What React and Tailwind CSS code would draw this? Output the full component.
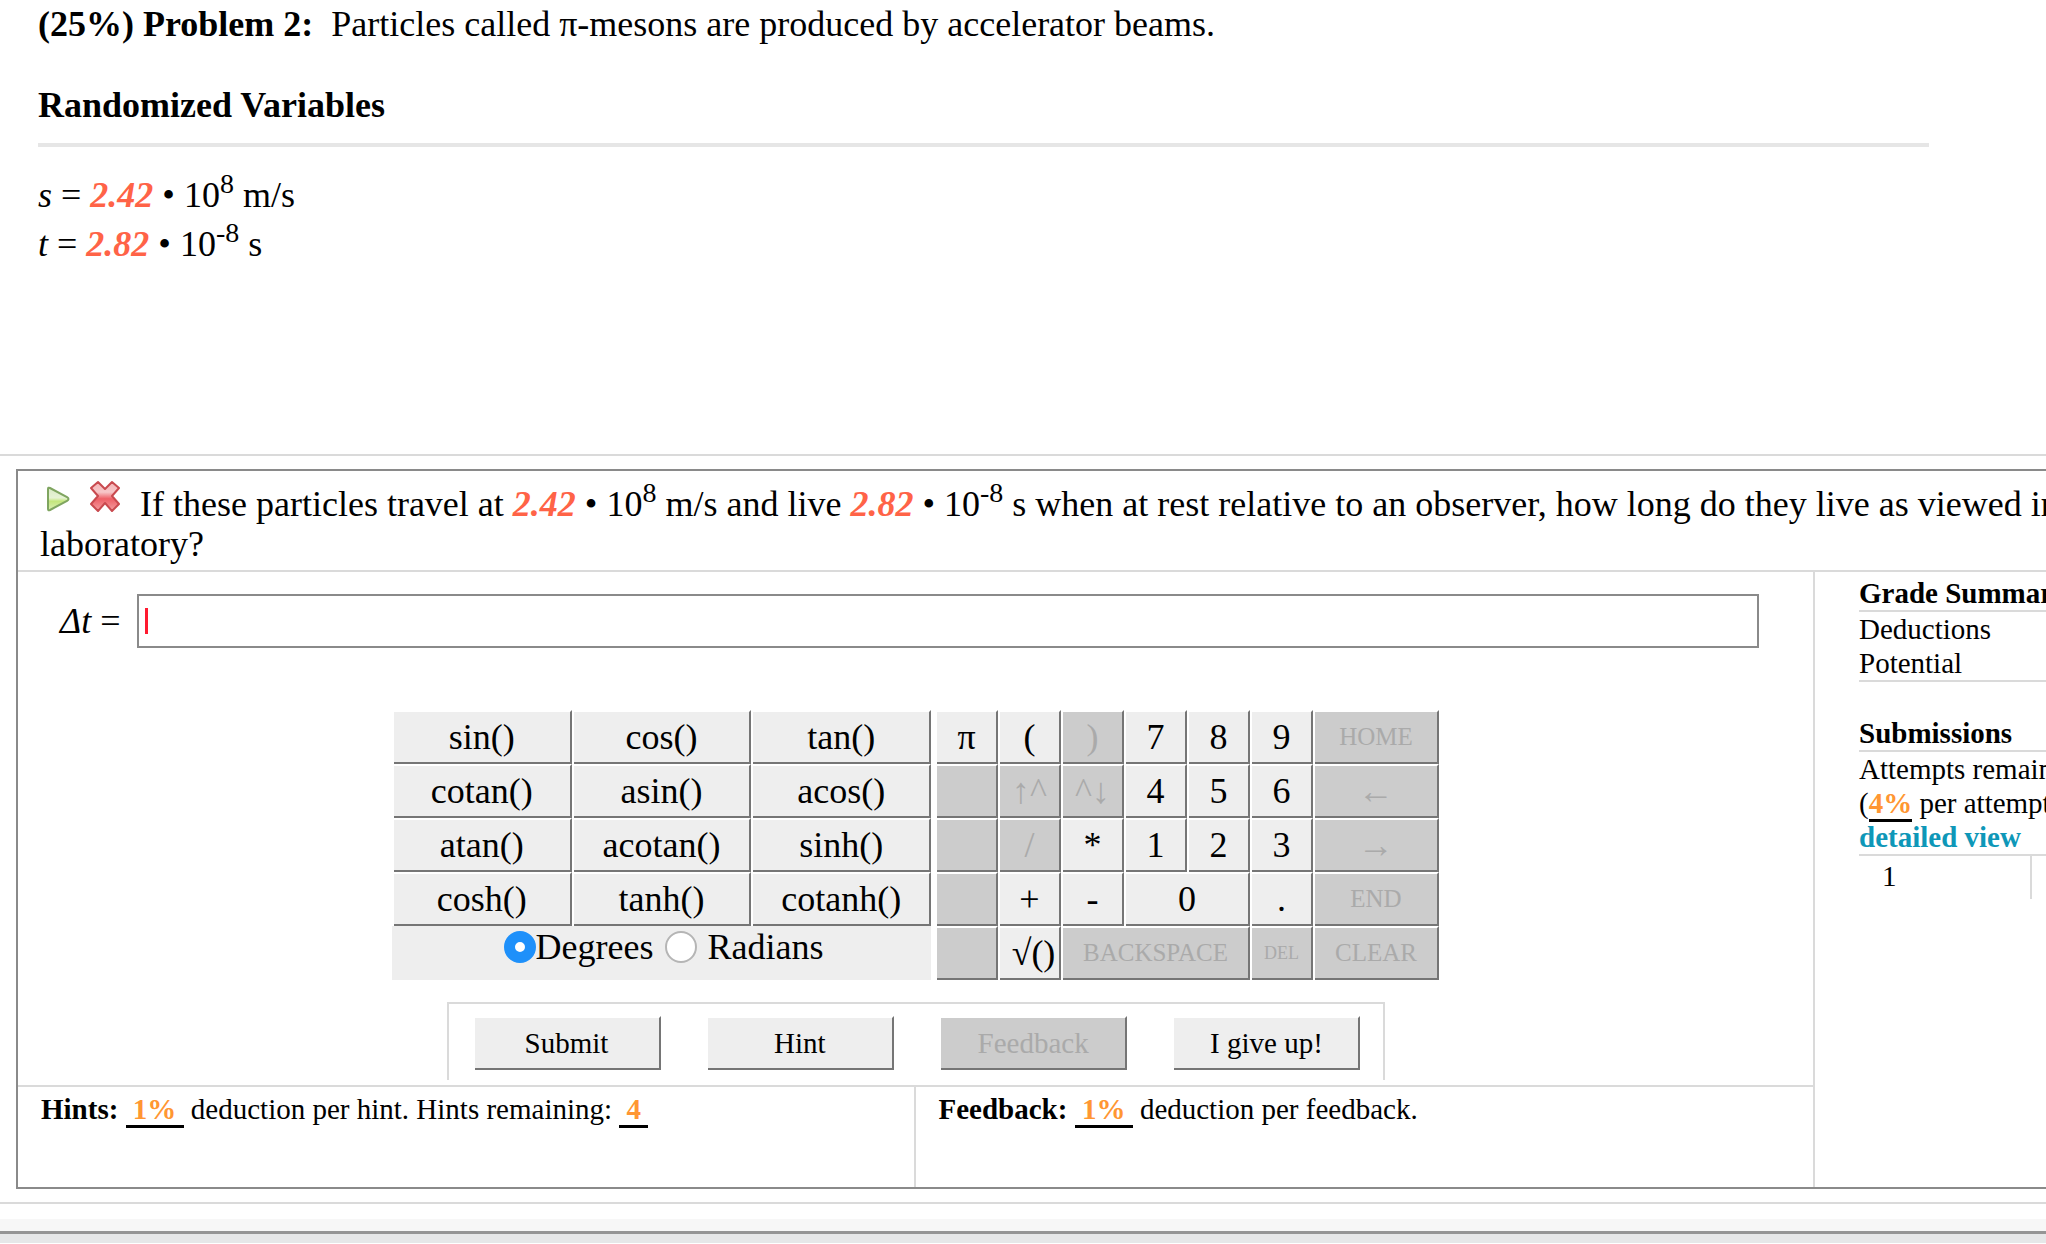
import { useState } from 'react';

const FUNCTIONS = [
  'sin()', 'cos()', 'tan()',
  'cotan()', 'asin()', 'acos()',
  'atan()', 'acotan()', 'sinh()',
  'cosh()', 'tanh()', 'cotanh()',
];

const KEYS = [
  { label: 'π' },
  { label: '(' },
  { label: ')', disabled: true },
  { label: '7' },
  { label: '8' },
  { label: '9' },
  { label: 'HOME', disabled: true, size: 'text-[25px]', span: 'col-span-2' },
  { label: '', disabled: true },
  { label: '↑^', disabled: true },
  { label: '^↓', disabled: true },
  { label: '4' },
  { label: '5' },
  { label: '6' },
  { label: '←', disabled: true, span: 'col-span-2' },
  { label: '', disabled: true },
  { label: '/', disabled: true },
  { label: '*' },
  { label: '1' },
  { label: '2' },
  { label: '3' },
  { label: '→', disabled: true, span: 'col-span-2' },
  { label: '', disabled: true },
  { label: '+' },
  { label: '-' },
  { label: '0', span: 'col-span-2' },
  { label: '.' },
  { label: 'END', disabled: true, size: 'text-[25px]', span: 'col-span-2' },
  { label: '', disabled: true },
  { label: '√()', span: 'pl-2' },
  { label: 'BACKSPACE', disabled: true, size: 'text-[25px]', span: 'col-span-3' },
  { label: 'DEL', disabled: true, size: 'text-[18px]' },
  { label: 'CLEAR', disabled: true, size: 'text-[25px]', span: 'col-span-2' },
];

const ACTIONS = [
  { label: 'Submit' },
  { label: 'Hint' },
  { label: 'Feedback', disabled: true },
  { label: 'I give up!' },
];

function Key({ label, disabled, size = 'text-[36px]', span = '', onClick }) {
  return (
    <button
      type="button"
      disabled={disabled}
      onClick={onClick}
      aria-label={label || 'unused'}
      className={`flex h-[54px] items-center justify-center border-y-2 border-r-2 border-t-transparent border-r-[#757575] border-b-[#757575] bg-clip-padding whitespace-nowrap ${
        disabled ? 'bg-[#ccc] text-[#aaa]' : 'bg-[#eee] text-black'
      } ${size} ${span}`}
    >
      {label}
    </button>
  );
}

function Value({ children }) {
  return <b className="font-bold text-[#ff6347] italic">{children}</b>;
}

function Blank({ children }) {
  return <span className="border-b-3 border-black font-bold whitespace-pre text-[#ff9632]">{children}</span>;
}

function PlayIcon() {
  return (
    <svg className="mr-5 mb-1 inline-block h-[26px] w-[24px] align-baseline" viewBox="0 0 24 26" aria-hidden="true">
      <defs>
        <linearGradient id="play" x1="0" y1="0" x2="0" y2="1">
          <stop offset="0" stopColor="#d9ebc6" />
          <stop offset="0.45" stopColor="#e6f3d4" />
          <stop offset="0.6" stopColor="#c3e67c" />
          <stop offset="1" stopColor="#dcefb8" />
        </linearGradient>
      </defs>
      <path d="M2 3 Q2 1 4 2 L21 11 Q24 13 21 15 L4 24 Q2 25 2 23 Z" fill="url(#play)" stroke="#7fa560" strokeWidth="2" />
    </svg>
  );
}

function CrossIcon() {
  return (
    <svg className="mr-5 mb-1 inline-block h-[32px] w-[30px] align-baseline" viewBox="0 0 30 32" aria-hidden="true">
      <defs>
        <linearGradient id="cross" x1="0" y1="0" x2="0" y2="1">
          <stop offset="0" stopColor="#f4b4b6" />
          <stop offset="0.35" stopColor="#f7c6c8" />
          <stop offset="0.58" stopColor="#ee5f66" />
          <stop offset="1" stopColor="#f4a0a3" />
        </linearGradient>
      </defs>
      <path
        d="M8 2 L15 9 L22 2 L29 8 L22 16 L29 24 L22 31 L15 23 L8 31 L1 24 L8 16 L1 8 Z"
        fill="url(#cross)"
        stroke="#c94a4f"
        strokeWidth="2"
        strokeLinejoin="round"
      />
    </svg>
  );
}

function Radio({ label, checked, onChange, gap }) {
  return (
    <label className={`flex items-center ${gap}`}>
      <input
        type="radio"
        name="angle"
        checked={checked}
        onChange={onChange}
        className="size-8 appearance-none rounded-full border-2 border-[#b5b5b5] bg-white checked:border-[11px] checked:border-[#1e90fa]"
      />
      {label}
    </label>
  );
}

export default function App() {
  const [answer, setAnswer] = useState('');
  const [unit, setUnit] = useState('Degrees');

  return (
    <div className="overflow-hidden bg-white font-['Liberation_Serif',serif] text-[36px] leading-10 text-black">
      <header className="mr-[117px] ml-[38px] pt-1">
        <h1>
          <b className="font-bold">(25%) Problem 2:</b>
          {'\u00a0 '}Particles called π-mesons are produced by accelerator beams.
        </h1>
        <h2 className="mt-[41px] font-bold">Randomized Variables</h2>
        <div className="mt-[18px] h-1 bg-[#e6e6e6]" />
        <div className="mt-6 leading-[49px]">
          <p>
            <i>s</i> = <Value>2.42</Value> • 10<sup className="text-[28px]">8</sup> m/s
          </p>
          <p>
            <i>t</i> = <Value>2.82</Value> • 10<sup className="text-[28px]">-8</sup> s
          </p>
        </div>
      </header>

      <main className="mt-[185px] border-y-2 border-[#dadada] py-[13px] pl-4">
        {/* the panel runs on past the right edge of the window */}
        <section className="-mr-[190px] border-2 border-[#8a8a8a]">
          <p className="border-b-2 border-[#dadada] pt-[9px] pr-5 pb-[6px] pl-[22px]">
            <span className="ml-[6px]">
              <PlayIcon />
              <CrossIcon />
            </span>
            If these particles travel at <Value>2.42</Value> • 10<sup className="text-[28px]">8</sup> m/s and live{' '}
            <Value>2.82</Value> • 10<sup className="text-[28px]">-8</sup> s when at rest relative to an observer, how
            long do they live as viewed in the laboratory?
          </p>

          <div className="flex">
            <div className="min-w-0 flex-1">
              <div className="flex items-center pt-[22px] pr-[54px] pl-[42px]">
                <label htmlFor="answer" className="mr-[17px] whitespace-nowrap">
                  <i>Δt</i> =
                </label>
                <div className="relative flex min-w-0 flex-1">
                  <input
                    id="answer"
                    value={answer}
                    onChange={(e) => setAnswer(e.target.value)}
                    className="h-[54px] w-full border-2 border-[#8a8a8a] px-2 caret-transparent outline-none"
                  />
                  {answer === '' && (
                    <span className="pointer-events-none absolute inset-y-[14px] left-2 w-[3px] bg-[#ff1a30]" />
                  )}
                </div>
              </div>

              <div className="mt-[62px] flex justify-center gap-1">
                <div className="w-[539px]">
                  <div className="grid grid-cols-3 gap-x-[2px] pl-[2px]">
                    {FUNCTIONS.map((name) => (
                      <Key key={name} label={name} onClick={() => setAnswer(answer + name)} />
                    ))}
                  </div>
                  <fieldset className="flex h-[54px] justify-center bg-[#eee] pb-3 pl-1">
                    <Radio label="Degrees" gap="gap-0" checked={unit === 'Degrees'} onChange={() => setUnit('Degrees')} />
                    <span className="w-3" />
                    <Radio label="Radians" gap="gap-[10px]" checked={unit === 'Radians'} onChange={() => setUnit('Radians')} />
                  </fieldset>
                </div>
                <div className="grid w-[504px] grid-cols-8 gap-x-[2px] pl-[2px]">
                  {KEYS.map((key, index) => (
                    <Key key={index} {...key} onClick={() => setAnswer(answer + key.label)} />
                  ))}
                </div>
              </div>

              <div className="mx-auto mt-[22px] mb-[5px] flex w-[938px] justify-between border-x-2 border-t-2 border-[#dadada] pt-3 pr-[22px] pb-[10px] pl-[26px]">
                {ACTIONS.map((action) => (
                  <div key={action.label} className="grid w-[186px]">
                    <Key {...action} size="text-[29px]" />
                  </div>
                ))}
              </div>

              <div className="grid grid-cols-2 border-t-2 border-[#dadada] text-[29px] leading-[34px]">
                <p className="h-[100px] border-r-2 border-[#dadada] pt-[5px] pl-[23px]">
                  <b>Hints:</b> <Blank> 1% </Blank> deduction per hint. Hints remaining: <Blank> 4 </Blank>
                </p>
                <p className="pt-[5px] pl-[23px]">
                  <b>Feedback:</b> <Blank> 1% </Blank> deduction per feedback.
                </p>
              </div>
            </div>

            <aside className="w-[421px] border-l-2 border-[#dadada] pt-1 pl-11 text-[29px] leading-[34px]">
              <h3 className="border-b-2 border-[#dadada] font-bold">Grade Summary</h3>
              <p>Deductions</p>
              <p className="border-b-2 border-[#dadada]">Potential</p>
              <h3 className="mt-[34px] border-b-2 border-[#dadada] font-bold">Submissions</h3>
              <p>Attempts remaining:</p>
              <p>
                (<Blank>4%</Blank> per attempt)
              </p>
              <a href="#detailed" className="block border-b-2 border-[#dadada] font-bold text-[#0e97b8]">
                detailed view
              </a>
              <p className="w-[173px] border-r-2 border-[#dadada] pt-[3px] pb-[6px] pl-[23px]">1</p>
            </aside>
          </div>
        </section>
      </main>

      <footer className="mt-[15px] border-b-[9px] border-[#e6e7e8] bg-[#f7f7f7]">
        <div className="h-[15px] border-b-3 border-[#959595]" />
      </footer>
    </div>
  );
}
